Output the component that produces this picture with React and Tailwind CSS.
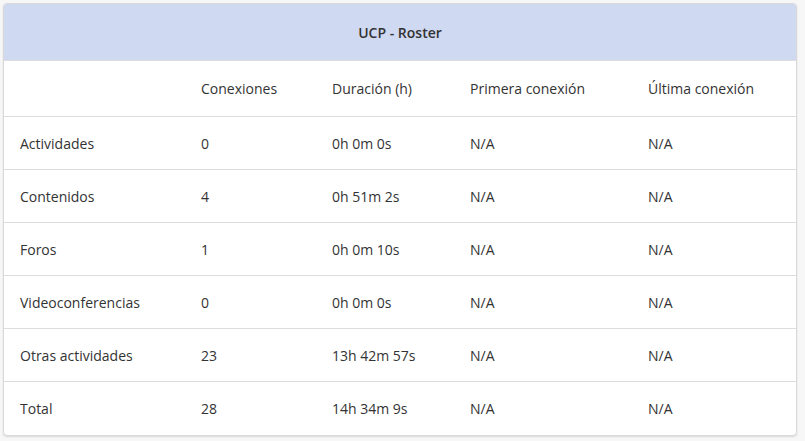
import React from 'react';

const rows = [
  ['Actividades', '0', '0h 0m 0s', 'N/A', 'N/A'],
  ['Contenidos', '4', '0h 51m 2s', 'N/A', 'N/A'],
  ['Foros', '1', '0h 0m 10s', 'N/A', 'N/A'],
  ['Videoconferencias', '0', '0h 0m 0s', 'N/A', 'N/A'],
  ['Otras actividades', '23', '13h 42m 57s', 'N/A', 'N/A'],
  ['Total', '28', '14h 34m 9s', 'N/A', 'N/A'],
];

const cols = 'grid grid-cols-[181px_131px_138px_178px_1fr]';

const App = () => (
  <div className="min-h-screen bg-[#f7f7f7] p-[3px] text-[14px] text-[#333]" style={{ fontFamily: '"Open Sans", sans-serif' }}>
    <div className="w-[794px] bg-white border border-[#d9d9d9] rounded-[4px] shadow-[0_1px_2px_rgba(0,0,0,0.12)] overflow-hidden">
      <div className="h-[57px] bg-[#cfd9f1] border-b border-[#ddd] flex items-center justify-center font-semibold">
        UCP - Roster
      </div>
      <div className={`${cols} h-[56px] items-center border-b border-[#ddd]`}>
        <div className="px-4"></div>
        <div className="px-4">Conexiones</div>
        <div className="px-4">Duración (h)</div>
        <div className="px-4">Primera conexión</div>
        <div className="px-4">Última conexión</div>
      </div>
      {rows.map((r, i) => (
        <div
          key={r[0]}
          className={`${cols} h-[53px] items-center ${i < rows.length - 1 ? 'border-b border-[#ddd]' : ''}`}
        >
          {r.map((c, j) => (
            <div key={j} className="px-4">{c}</div>
          ))}
        </div>
      ))}
    </div>
  </div>
);

export default App;
